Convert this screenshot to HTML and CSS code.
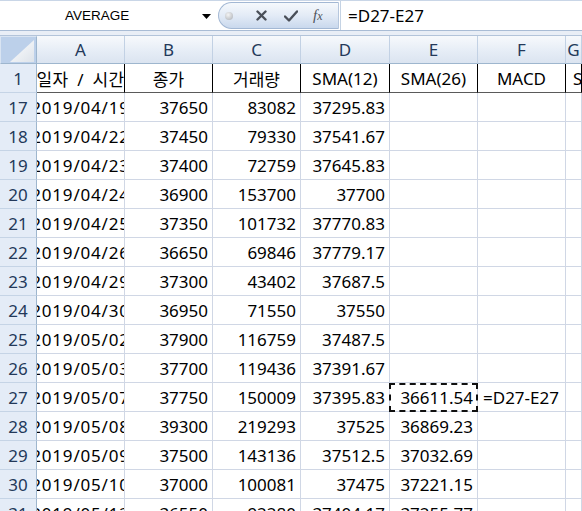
FILE: index.html
```html
<!DOCTYPE html>
<html lang="ko">
<head>
    <meta charset="UTF-8">
    <title>MACD - Excel</title>
    <link rel="stylesheet" href="styles.css">
</head>
<body>
    <div class="formula-bar">
        <div class="name-box">
            <span class="name">AVERAGE</span>
            <svg class="dropdown" width="9" height="5" viewBox="0 0 9 5"><path d="M0 0h9L4.5 5z" fill="#000"/></svg>
        </div>
        <div class="fx-buttons">
            <span class="dot"></span>
            <svg class="icon-x" width="11" height="11" viewBox="0 0 11 11"><path d="M1.5 1.5l8 8M9.5 1.5l-8 8" stroke="#4a4f58" stroke-width="2.4" stroke-linecap="round"/></svg>
            <svg class="icon-check" width="14" height="12" viewBox="0 0 14 12"><path d="M1 6.5l4 4L13 1.5" fill="none" stroke="#4a4f58" stroke-width="2.4" stroke-linejoin="round" stroke-linecap="round"/></svg>
            <span class="fx">f<span class="fx-sub">x</span></span>
        </div>
        <div class="formula-input">=D27-E27</div>
    </div>
    <div class="bar-gap"></div>

    <div class="sheet">
        <!-- column headers -->
        <div class="corner">
            <svg width="24" height="22" viewBox="0 0 24 22"><defs><linearGradient id="tri" x1="0" y1="0" x2="1" y2="1"><stop offset="0" stop-color="#ffffff"/><stop offset="1" stop-color="#dde3ea"/></linearGradient></defs><path d="M0 22L24 0v22z" fill="url(#tri)"/></svg>
        </div>
        <div class="ch">A</div><div class="ch">B</div><div class="ch">C</div><div class="ch">D</div><div class="ch">E</div><div class="ch">F</div><div class="ch">G</div>

        <!-- row 1 -->
        <div class="rh">1</div>
        <div class="c hd wide">일자 / 시간</div><div class="c hd">종가</div><div class="c hd">거래량</div><div class="c hd">SMA(12)</div><div class="c hd">SMA(26)</div><div class="c hd">MACD</div><div class="c hd left">Signal(9)</div>

        <div class="rh">17</div><div class="c date">2019/04/19</div><div class="c num">37650</div><div class="c num">83082</div><div class="c num">37295.83</div><div class="c"></div><div class="c"></div><div class="c"></div>
        <div class="rh">18</div><div class="c date">2019/04/22</div><div class="c num">37450</div><div class="c num">79330</div><div class="c num">37541.67</div><div class="c"></div><div class="c"></div><div class="c"></div>
        <div class="rh">19</div><div class="c date">2019/04/23</div><div class="c num">37400</div><div class="c num">72759</div><div class="c num">37645.83</div><div class="c"></div><div class="c"></div><div class="c"></div>
        <div class="rh">20</div><div class="c date">2019/04/24</div><div class="c num">36900</div><div class="c num">153700</div><div class="c num">37700</div><div class="c"></div><div class="c"></div><div class="c"></div>
        <div class="rh">21</div><div class="c date">2019/04/25</div><div class="c num">37350</div><div class="c num">101732</div><div class="c num">37770.83</div><div class="c"></div><div class="c"></div><div class="c"></div>
        <div class="rh">22</div><div class="c date">2019/04/26</div><div class="c num">36650</div><div class="c num">69846</div><div class="c num">37779.17</div><div class="c"></div><div class="c"></div><div class="c"></div>
        <div class="rh">23</div><div class="c date">2019/04/29</div><div class="c num">37300</div><div class="c num">43402</div><div class="c num">37687.5</div><div class="c"></div><div class="c"></div><div class="c"></div>
        <div class="rh">24</div><div class="c date">2019/04/30</div><div class="c num">36950</div><div class="c num">71550</div><div class="c num">37550</div><div class="c"></div><div class="c"></div><div class="c"></div>
        <div class="rh">25</div><div class="c date">2019/05/02</div><div class="c num">37900</div><div class="c num">116759</div><div class="c num">37487.5</div><div class="c"></div><div class="c"></div><div class="c"></div>
        <div class="rh">26</div><div class="c date">2019/05/03</div><div class="c num">37700</div><div class="c num">119436</div><div class="c num">37391.67</div><div class="c"></div><div class="c"></div><div class="c"></div>
        <div class="rh">27</div><div class="c date">2019/05/07</div><div class="c num">37750</div><div class="c num">150009</div><div class="c num">37395.83</div><div class="c num copied">36611.54</div><div class="c left">=D27-E27</div><div class="c"></div>
        <div class="rh">28</div><div class="c date">2019/05/08</div><div class="c num">39300</div><div class="c num">219293</div><div class="c num">37525</div><div class="c num">36869.23</div><div class="c"></div><div class="c"></div>
        <div class="rh">29</div><div class="c date">2019/05/09</div><div class="c num">37500</div><div class="c num">143136</div><div class="c num">37512.5</div><div class="c num">37032.69</div><div class="c"></div><div class="c"></div>
        <div class="rh">30</div><div class="c date">2019/05/10</div><div class="c num">37000</div><div class="c num">100081</div><div class="c num">37475</div><div class="c num">37221.15</div><div class="c"></div><div class="c"></div>
        <div class="rh">31</div><div class="c date">2019/05/13</div><div class="c num">36550</div><div class="c num">92280</div><div class="c num">37404.17</div><div class="c num">37255.77</div><div class="c"></div><div class="c"></div>
    </div>
</body>
</html>
```

FILE: styles.css
```css
body {
    margin: 0;
    width: 582px;
    height: 511px;
    overflow: hidden;
    background: #fff;
    font-family: "Noto Sans", "Noto Sans CJK KR", sans-serif;
    color: #000;
}

/* formula bar */
.formula-bar {
    display: flex;
    height: 31px;
    border-top: 1px solid #c9d6e7;
    border-bottom: 1px solid #a9bcd5;
    box-sizing: border-box;
    background: #fff;
}

.name-box {
    width: 218px;
    display: flex;
    align-items: center;
    font-family: "Liberation Sans", Arial, sans-serif;
    font-size: 13.5px;
}

.name {
    padding-left: 65px;
}

.dropdown {
    margin-left: 73px;
    margin-top: 1px;
}

.fx-buttons {
    width: 121px;
    height: 27px;
    margin-top: 1px;
    box-sizing: border-box;
    border: 1px solid #a3b8d4;
    border-right-color: #b6c7dd;
    border-radius: 14px 0 0 14px;
    background: linear-gradient(#f6f9fc, #e3ebf6 50%, #c9d8ed);
    display: flex;
    align-items: center;
}

.dot {
    width: 8px;
    height: 8px;
    margin-left: 6px;
    border-radius: 50%;
    background: radial-gradient(circle at 40% 35%, #f4f4f4, #a9adb3);
}

.icon-x {
    margin-left: 23px;
}

.icon-check {
    margin-left: 17px;
}

.fx {
    margin-left: 15px;
    font-family: "Liberation Serif", serif;
    font-style: italic;
    font-size: 15px;
    color: #4f545c;
}

.fx-sub {
    font-size: 12px;
}

.formula-input {
    flex: 1;
    border-left: 1px solid #c5d3e4;
    margin-left: 1px;
    padding-left: 7px;
    display: flex;
    align-items: center;
    font-size: 17px;
}

.bar-gap {
    height: 4px;
    background: #e9eef6;
    border-bottom: 1px solid #b3c4da;
}

/* sheet grid */
.sheet {
    display: grid;
    grid-template-columns: 37px 88px 88px 88px 89px 88px 88px 1fr;
    grid-template-rows: 28px;
    grid-auto-rows: 29px;
    font-size: 17px;
}

.sheet > div {
    box-sizing: border-box;
    display: flex;
    align-items: center;
    white-space: nowrap;
    overflow: hidden;
}

.corner {
    background: #bcd0ea;
    border: 1px solid #d9e4f2;
    border-right-color: #9eb6ce;
    border-bottom-color: #9eb6ce;
    justify-content: flex-end;
    align-items: flex-end !important;
    padding: 0 2px 1px 0;
}

.corner svg {
    display: block;
}

.ch {
    justify-content: center;
    background: linear-gradient(#f7f9fc, #e6edf6 55%, #dbe4f0);
    border-right: 1px solid #c2d1e4;
    border-bottom: 1px solid #9eb6ce;
    color: #23395a;
}

.rh {
    justify-content: center;
    background: #e4ecf7;
    border-right: 1px solid #9eb6ce;
    border-bottom: 1px solid #c5d4e6;
    color: #23395a;
}

.c {
    border-right: 1px solid #d0d7e5;
    border-bottom: 1px solid #d0d7e5;
    padding: 0 4px;
}

.hd {
    justify-content: center;
    border-right-color: #000;
    border-bottom-color: #5a5a5a;
}

.hd.wide {
    padding: 0;
    word-spacing: 4px;
    letter-spacing: 0.3px;
}

.hd.left {
    justify-content: flex-start;
    padding-left: 7px;
}

.date {
    justify-content: center;
    padding: 0;
    letter-spacing: 0.8px;
}

.num {
    justify-content: flex-end;
}

.left {
    justify-content: flex-start;
}

.c.left:not(.hd) {
    padding-left: 5px;
}

.copied {
    position: relative;
    overflow: visible !important;
}

.copied::after {
    content: "";
    position: absolute;
    top: 0;
    left: -1px;
    right: -1px;
    bottom: -1px;
    border: 2px dashed #111;
}
```
